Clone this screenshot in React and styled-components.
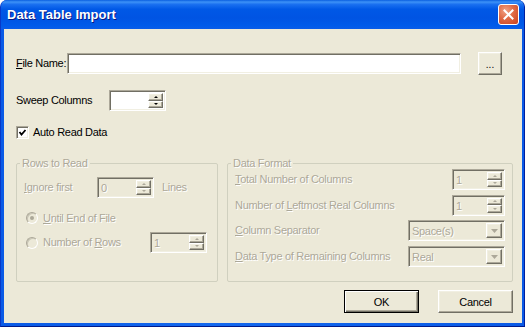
import React from 'react';
import styled, { createGlobalStyle, css } from 'styled-components';

const Spinner = ({ value, width, disabled }) => (
  <SpinBox $width={width} $disabled={disabled}>
    <SpinValue $disabled={disabled}>{value}</SpinValue>
    <SpinButtons>
      <SpinButton><UpArrow $disabled={disabled} /></SpinButton>
      <SpinButton><DownArrow $disabled={disabled} /></SpinButton>
    </SpinButtons>
  </SpinBox>
);

const Combo = ({ value, width }) => (
  <ComboBox $width={width}>
    <SpinValue $disabled>{value}</SpinValue>
    <DropButton>
      <svg width="7" height="4" viewBox="0 0 7 4">
        <path d="M0 0 H7 L3.5 4 Z" fill="#aca899" />
      </svg>
    </DropButton>
  </ComboBox>
);

const App = () => (
  <>
    <GlobalStyle />
    <Window>
      <TitleBar>
        <Title>Data Table Import</Title>
        <CloseButton aria-label="Close">
          <svg width="11" height="11" viewBox="0 0 11 11">
            <path d="M1.5 1.5 L9.5 9.5 M9.5 1.5 L1.5 9.5" stroke="#fff" strokeWidth="2" strokeLinecap="square" />
          </svg>
        </CloseButton>
      </TitleBar>
      <Body>
        <Client>
          <FileRow>
            <Label $width={51}><u>F</u>ile Name:</Label>
            <TextBox />
            <BrowseButton>...</BrowseButton>
          </FileRow>

          <SweepRow>
            <Label $width={93}>Sweep Columns</Label>
            <Spinner width={57} value="" />
          </SweepRow>

          <CheckRow>
            <CheckBox>
              <svg width="9" height="9" viewBox="0 0 9 9">
                <polyline points="1.5,4 3.5,6.5 7.5,2" fill="none" stroke="#000" strokeWidth="1.8" />
              </svg>
            </CheckBox>
            <Label>Auto Read Data</Label>
          </CheckRow>

          <Groups>
            <Group $width={202} $padTop={8}>
              <Legend>Rows to Read</Legend>
              <IgnoreRow>
                <Label $width={73} $disabled><u>I</u>gnore first</Label>
                <Spinner width={57} value="0" disabled />
                <Label $disabled>Lines</Label>
              </IgnoreRow>
              <RadioRow $top={13}>
                <Radio $checked />
                <Label $disabled><u>U</u>ntil End of File</Label>
              </RadioRow>
              <RadioRow $top={7}>
                <Radio />
                <Label $width={102} $disabled>Number of <u>R</u>ows</Label>
                <Spinner width={57} value="1" disabled />
              </RadioRow>
            </Group>

            <Group $width={286} $padTop={0}>
              <Legend>Data Format</Legend>
              <FormatGrid>
                <Label $disabled><u>T</u>otal Number of Columns</Label>
                <Spinner width={53} value="1" disabled />
                <Label $disabled>Number of <u>L</u>eftmost Real Columns</Label>
                <Spinner width={53} value="1" disabled />
                <Label $disabled><u>C</u>olumn Separator</Label>
                <Combo width={97} value="Space(s)" />
                <Label $disabled><u>D</u>ata Type of Remaining Columns</Label>
                <Combo width={97} value="Real" />
              </FormatGrid>
            </Group>
          </Groups>

          <ButtonRow>
            <DialogButton $default>OK</DialogButton>
            <DialogButton>Cancel</DialogButton>
          </ButtonRow>
        </Client>
      </Body>
    </Window>
  </>
);

export default App;

const GlobalStyle = createGlobalStyle`
  html, body {
    margin: 0;
    padding: 0;
    background: #fff;
  }
  body {
    font-family: 'Liberation Sans', Arial, sans-serif;
    font-size: 11px;
    letter-spacing: -0.3px;
  }
`;

const sunken = css`
  box-sizing: border-box;
  border: 1px solid;
  border-color: #aca899 #fff #fff #aca899;
  box-shadow: inset 1px 1px 0 #716f64, inset -1px -1px 0 #f1efe2;
`;

const raised = css`
  box-sizing: border-box;
  border: 1px solid;
  border-color: #fff #716f64 #716f64 #fff;
  box-shadow: inset -1px -1px 0 #aca899, inset 1px 1px 0 #f1efe2;
  background: #ece9d8;
`;

const Window = styled.div`
  width: 525px;
  height: 327px;
  box-sizing: border-box;
  display: flex;
  flex-direction: column;
  background: #0055e5;
  border-left: 1px solid #0838c8;
  border-right: 1px solid #001f9e;
  border-bottom: 1px solid #001a8a;
  border-radius: 7px 7px 0 0;
  overflow: hidden;
`;

const TitleBar = styled.div`
  height: 29px;
  flex: none;
  display: flex;
  align-items: center;
  justify-content: space-between;
  padding: 0 5px 0 6px;
  background: linear-gradient(
    180deg,
    #0a5fe0 0%,
    #3d92f7 7%,
    #1a70f0 15%,
    #0058e6 32%,
    #0054e3 62%,
    #005bea 88%,
    #0a5de8 100%
  );
`;

const Title = styled.span`
  color: #fff;
  font-family: 'Liberation Sans', Arial, sans-serif;
  font-weight: bold;
  font-size: 13px;
  letter-spacing: 0;
  text-shadow: 1px 1px 0 #0a1883;
`;

const CloseButton = styled.div`
  width: 21px;
  height: 21px;
  box-sizing: border-box;
  border: 1px solid #fff;
  border-radius: 3px;
  display: flex;
  align-items: center;
  justify-content: center;
  background: radial-gradient(circle at 35% 30%, #f0a285 0%, #e06a45 45%, #c9401e 100%);
`;

const Body = styled.div`
  flex: 1;
  display: flex;
  padding: 0 3px 3px;
  background: linear-gradient(90deg, #0a5ae6, #1468ee 40%, #0a5ae6);
`;

const Client = styled.div`
  flex: 1;
  background: #ece9d8;
  display: flex;
  flex-direction: column;
  padding: 23px 9px 0 12px;
  box-sizing: border-box;
`;

const Label = styled.span`
  flex: none;
  width: ${p => (p.$width ? `${p.$width}px` : 'auto')};
  color: ${p => (p.$disabled ? '#aca899' : '#000')};
  text-shadow: ${p => (p.$disabled ? '1px 1px 0 #fff' : 'none')};
  white-space: nowrap;
  line-height: 13px;
`;

const FileRow = styled.div`
  display: flex;
  align-items: center;
  height: 23px;
`;

const TextBox = styled.div`
  ${sunken};
  width: 394px;
  height: 21px;
  background: #fff;
`;

const BrowseButton = styled.div`
  ${raised};
  width: 24px;
  height: 23px;
  margin-left: 17px;
  display: flex;
  align-items: center;
  justify-content: center;
  padding-top: 2px;
  font-size: 10px;
  letter-spacing: 0;
`;

const SweepRow = styled.div`
  display: flex;
  align-items: center;
  margin-top: 15px;
`;

const CheckRow = styled.div`
  display: flex;
  align-items: center;
  gap: 4px;
  margin-top: 15px;
`;

const CheckBox = styled.div`
  ${sunken};
  width: 13px;
  height: 13px;
  background: #fff;
  display: flex;
  align-items: center;
  justify-content: center;
`;

const Groups = styled.div`
  display: flex;
  gap: 9px;
  margin-top: 18px;
`;

const Group = styled.fieldset`
  box-sizing: border-box;
  width: ${p => p.$width}px;
  height: 125px;
  margin: 0;
  padding: ${p => p.$padTop}px 7px 0;
  min-width: 0;
  border: 1px solid #d0d0bf;
  border-radius: 2px;
`;

const Legend = styled.legend`
  margin-left: -4px;
  padding: 0 2px;
  line-height: 12px;
  color: #aca899;
  text-shadow: 1px 1px 0 #fff;
`;

const IgnoreRow = styled.div`
  display: flex;
  align-items: center;

  & > *:last-child {
    margin-left: 8px;
  }
`;

const RadioRow = styled.div`
  display: flex;
  align-items: center;
  min-height: 14px;
  margin-top: ${p => p.$top}px;
  padding-left: 2px;
  gap: 5px;
`;

const Radio = styled.div`
  position: relative;
  width: 12px;
  height: 12px;
  box-sizing: border-box;
  border-radius: 50%;
  border: 1px solid;
  border-color: #aca899 #fff #fff #aca899;
  box-shadow: inset 1px 1px 0 #c9c6b6;
  background: #ece9d8;
  flex: none;

  &::after {
    content: '';
    display: ${p => (p.$checked ? 'block' : 'none')};
    position: absolute;
    left: 3px;
    top: 3px;
    width: 4px;
    height: 4px;
    border-radius: 50%;
    background: #aca899;
  }
`;

const FormatGrid = styled.div`
  display: grid;
  grid-template-columns: 1fr auto;
  grid-auto-rows: 21px;
  row-gap: 4.7px;
  align-items: center;

  & > :nth-child(even) {
    justify-self: end;
  }
`;

const SpinBox = styled.div`
  ${sunken};
  width: ${p => p.$width}px;
  height: 21px;
  padding: 2px;
  display: flex;
  background: ${p => (p.$disabled ? '#ece9d8' : '#fff')};
`;

const SpinValue = styled.span`
  flex: 1;
  padding-left: 1px;
  line-height: 17px;
  color: ${p => (p.$disabled ? '#aca899' : '#000')};
  text-shadow: ${p => (p.$disabled ? '1px 1px 0 #fff' : 'none')};
  white-space: nowrap;
  overflow: hidden;
`;

const SpinButtons = styled.div`
  width: 15px;
  display: flex;
  flex-direction: column;
`;

const SpinButton = styled.div`
  ${raised};
  flex: 1;
  display: flex;
  align-items: center;
  justify-content: center;
`;

const UpArrow = styled.div`
  width: 0;
  height: 0;
  border-left: 2px solid transparent;
  border-right: 2px solid transparent;
  border-bottom: 2px solid ${p => (p.$disabled ? '#aca899' : '#000')};
`;

const DownArrow = styled.div`
  width: 0;
  height: 0;
  border-left: 2px solid transparent;
  border-right: 2px solid transparent;
  border-top: 2px solid ${p => (p.$disabled ? '#aca899' : '#000')};
`;

const ComboBox = styled.div`
  ${sunken};
  width: ${p => p.$width}px;
  height: 21px;
  padding: 2px;
  display: flex;
  background: #ece9d8;
`;

const DropButton = styled.div`
  ${raised};
  width: 16px;
  display: flex;
  align-items: center;
  justify-content: center;
`;

const ButtonRow = styled.div`
  display: flex;
  justify-content: flex-end;
  gap: 19px;
  margin-top: 8px;
`;

const DialogButton = styled.div`
  box-sizing: border-box;
  width: 75px;
  height: 23px;
  display: flex;
  align-items: center;
  justify-content: center;
  background: #ece9d8;
  ${p =>
    p.$default
      ? css`
          border: 1px solid #000;
          box-shadow: inset 1px 1px 0 #fff, inset -1px -1px 0 #716f64, inset -2px -2px 0 #aca899;
        `
      : css`
          border: 1px solid;
          border-color: #fff #716f64 #716f64 #fff;
          box-shadow: inset -1px -1px 0 #aca899, inset 1px 1px 0 #f1efe2;
        `}
`;
